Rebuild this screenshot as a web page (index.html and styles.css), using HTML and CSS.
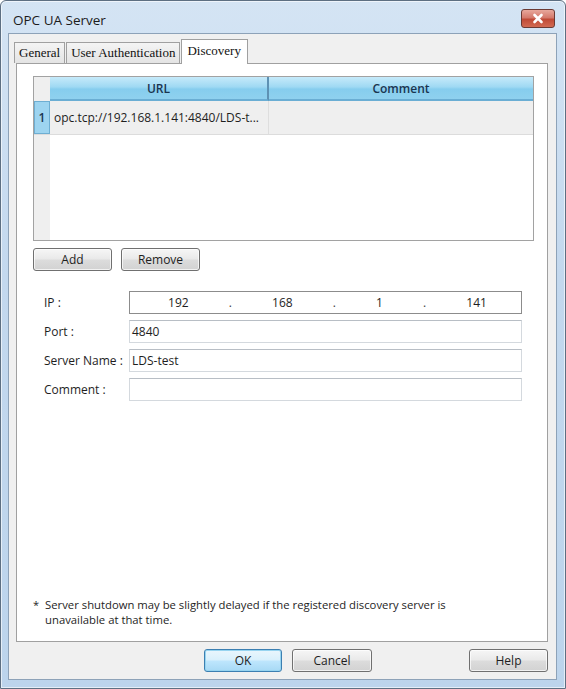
FILE: index.html
```html
<!DOCTYPE html>
<html lang="en">
<head>
    <meta charset="UTF-8">
    <title>OPC UA Server</title>
    <link rel="stylesheet" href="styles.css">
</head>
<body>
    <div class="window">
        <div class="titlebar">
            <span class="title">OPC UA Server</span>
            <button class="close-btn" aria-label="Close">
                <svg width="14" height="11" viewBox="0 0 14 11">
                    <path d="M3.5 2 L10.5 9 M10.5 2 L3.5 9" stroke="#fff" stroke-width="2.6" stroke-linecap="round"/>
                </svg>
            </button>
        </div>

        <div class="client">
            <div class="tabs">
                <div class="tab">General</div>
                <div class="tab">User Authentication</div>
                <div class="tab active">Discovery</div>
            </div>

            <div class="panel">
                <!-- Registered discovery servers -->
                <div class="grid">
                    <div class="grid-head">
                        <div class="corner"></div>
                        <div class="col col-url">URL</div>
                        <div class="col col-comment">Comment</div>
                    </div>
                    <div class="grid-row">
                        <div class="row-num">1</div>
                        <div class="cell cell-url">opc.tcp://192.168.1.141:4840/LDS-t...</div>
                        <div class="cell cell-comment"></div>
                    </div>
                    <div class="grid-empty">
                        <div class="row-gutter"></div>
                    </div>
                </div>

                <div class="grid-actions">
                    <button class="btn">Add</button>
                    <button class="btn">Remove</button>
                </div>

                <div class="form">
                    <label class="form-label">IP :</label>
                    <div class="input ip-input">
                        <span>192</span><span class="dot">.</span>
                        <span>168</span><span class="dot">.</span>
                        <span>1</span><span class="dot">.</span>
                        <span>141</span>
                    </div>

                    <label class="form-label">Port :</label>
                    <div class="input">4840</div>

                    <label class="form-label">Server Name :</label>
                    <div class="input">LDS-test</div>

                    <label class="form-label">Comment :</label>
                    <div class="input"></div>
                </div>

                <div class="note">
                    <span class="note-mark">*</span>
                    <span>Server shutdown may be slightly delayed if the registered discovery server is unavailable at that time.</span>
                </div>
            </div>

            <div class="footer">
                <button class="btn btn-default">OK</button>
                <button class="btn btn-cancel">Cancel</button>
                <button class="btn btn-help">Help</button>
            </div>
        </div>
    </div>
</body>
</html>
```

FILE: styles.css
```css
* { box-sizing: border-box; }
body {
    margin: 0;
    background: #fff;
    font-family: "Open Sans", "Noto Sans", sans-serif;
    font-size: 12px;
    color: #1e1e1e;
}

/* Aero-style window frame */
.window {
    width: 566px;
    height: 689px;
    display: flex;
    flex-direction: column;
    border: 1px solid #5d6f82;
    border-radius: 6px 6px 0 0;
    background: linear-gradient(to bottom, #d4e4f4 0%, #c3d8ee 40%, #bcd4ec 100%);
    box-shadow: inset 0 0 0 1px rgba(255,255,255,0.6);
}
.titlebar {
    height: 32px;
    display: flex;
    align-items: center;
    justify-content: space-between;
    padding: 5px 10px 0 12px;
}
.title {
    font-size: 13.5px;
    color: #1b1b1b;
}
.close-btn {
    width: 34px;
    height: 19px;
    margin-top: -2px;
    border: 1px solid #6b3a33;
    border-radius: 3px;
    background: linear-gradient(to bottom, #e8a89c 0%, #d47a6c 45%, #c04a36 55%, #d26a52 100%);
    display: flex;
    align-items: center;
    justify-content: center;
    padding: 0;
}

.client {
    flex: 1;
    margin: 0 8px 8px 7px;
    border: 1px solid #8da2b8;
    background: #f0f0f0;
    display: flex;
    flex-direction: column;
}

/* Tab strip */
.tabs {
    display: flex;
    align-items: flex-end;
    height: 29px;
    padding-left: 5px;
}
.tab {
    font-family: "Liberation Serif", serif;
    font-size: 13px;
    height: 21px;
    padding: 2px 4px 0 4px;
    border: 1px solid #a0a0a0;
    border-bottom: none;
    margin-right: 1px;
    background: linear-gradient(to bottom, #f4f4f4, #e4e4e4);
    color: #111;
}
.tab.active {
    height: 25px;
    padding: 3px 6px 0 5px;
    background: #fff;
    position: relative;
    top: 1px;
    z-index: 1;
}

.panel {
    flex: 1;
    margin: 0 8px 0 7px;
    background: #fff;
    border: 1px solid #a0a0a0;
    padding: 12px 13px 0 16px;
    display: flex;
    flex-direction: column;
}

/* Server list */
.grid {
    height: 165px;
    border: 1px solid #a2a2a2;
    display: flex;
    flex-direction: column;
    background: #fff;
}
.grid-head {
    display: flex;
    height: 24px;
}
.corner {
    width: 16px;
    background: #efefef;
}
.col {
    display: flex;
    align-items: center;
    justify-content: center;
    background: linear-gradient(to bottom, #c6eafa 0%, #9fd9f3 45%, #86cdee 55%, #8fd1ef 100%);
    border-bottom: 2px solid #6aaed4;
    color: #1a3550;
    font-weight: 600;
}
.col-url {
    width: 219px;
    border-right: 2px solid #5e92b4;
}
.col-comment { flex: 1; }

.grid-row {
    display: flex;
    height: 34px;
    border-bottom: 1px solid #dcdcdc;
}
.row-num {
    width: 16px;
    background: #9dd4f0;
    border: 1px solid #6eaed2;
    display: flex;
    align-items: center;
    justify-content: center;
    font-weight: 600;
    color: #1a3550;
}
.cell {
    background: #efefef;
    display: flex;
    align-items: center;
    padding-left: 4px;
}
.cell-url {
    width: 219px;
    border-right: 1px solid #dedede;
    white-space: nowrap;
}
.cell-comment { flex: 1; }
.grid-empty {
    flex: 1;
    display: flex;
}
.row-gutter {
    width: 16px;
    background: #efefef;
}

/* Buttons */
.btn {
    font-family: inherit;
    font-size: 12px;
    color: #1e1e1e;
    height: 23px;
    width: 79px;
    border: 1px solid #707070;
    border-radius: 3px;
    background: linear-gradient(to bottom, #f6f6f6 0%, #e9e9e9 48%, #dcdcdc 52%, #d2d2d2 100%);
    box-shadow: inset 0 0 0 1px rgba(255,255,255,0.7);
    padding: 0;
}
.grid-actions {
    display: flex;
    gap: 9px;
    margin-top: 7px;
}

/* Server details */
.form {
    display: grid;
    grid-template-columns: 85px 393px;
    row-gap: 6px;
    margin-top: 20px;
    padding-left: 11px;
    align-items: center;
}
.form-label { color: #1e1e1e; }
.input {
    height: 23px;
    border: 1px solid #d4d9de;
    border-top-color: #b8bec5;
    display: flex;
    align-items: center;
    padding-left: 2px;
    background: #fff;
}
.ip-input {
    border-color: #8c8c8c;
    justify-content: space-around;
    padding: 0 14px 0 18px;
}
.ip-input .dot { color: #444; }

.note {
    margin-top: auto;
    margin-bottom: 14px;
    display: flex;
    gap: 6px;
    line-height: 15px;
    font-size: 11.3px;
    padding-right: 60px;
}
.note-mark { font-size: 11px; }

/* Dialog buttons */
.footer {
    display: flex;
    height: 37px;
    padding: 7px 8px 0 195px;
    gap: 10px;
}
.btn-default {
    width: 78px;
    border-color: #3c7fb1;
    background: linear-gradient(to bottom, #eaf6fd 0%, #d9f0fc 48%, #bee6fd 52%, #a7d9f5 100%);
    box-shadow: inset 0 0 0 1px #97d4f0;
}
.btn-cancel { width: 80px; }
.btn-help { margin-left: auto; }
```
